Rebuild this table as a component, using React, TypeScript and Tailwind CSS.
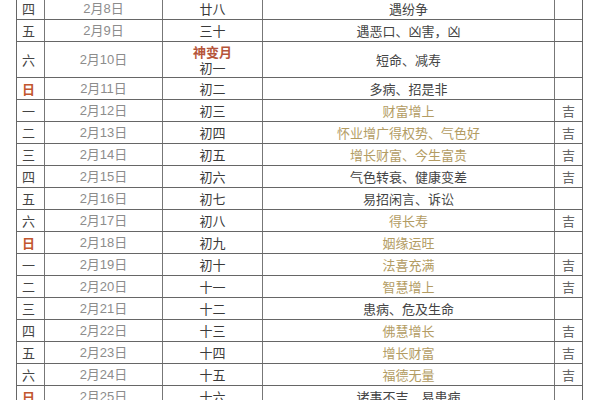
type Row = {
  wd: string;
  date: string;
  lunar: string;
  note?: string;
  text: string;
  gold?: boolean;
  ji?: boolean;
};

const rows: Row[] = [
  { wd: '四', date: '2月8日', lunar: '廿八', text: '遇纷争' },
  { wd: '五', date: '2月9日', lunar: '三十', text: '遇恶口、凶害，凶' },
  { wd: '六', date: '2月10日', lunar: '初一', note: '神变月', text: '短命、减寿' },
  { wd: '日', date: '2月11日', lunar: '初二', text: '多病、招是非' },
  { wd: '一', date: '2月12日', lunar: '初三', text: '财富增上', gold: true, ji: true },
  { wd: '二', date: '2月13日', lunar: '初四', text: '怀业增广得权势、气色好', gold: true, ji: true },
  { wd: '三', date: '2月14日', lunar: '初五', text: '增长财富、今生富贵', gold: true, ji: true },
  { wd: '四', date: '2月15日', lunar: '初六', text: '气色转衰、健康变差', ji: true },
  { wd: '五', date: '2月16日', lunar: '初七', text: '易招闲言、诉讼' },
  { wd: '六', date: '2月17日', lunar: '初八', text: '得长寿', gold: true, ji: true },
  { wd: '日', date: '2月18日', lunar: '初九', text: '姻缘运旺', gold: true },
  { wd: '一', date: '2月19日', lunar: '初十', text: '法喜充满', gold: true, ji: true },
  { wd: '二', date: '2月20日', lunar: '十一', text: '智慧增上', gold: true, ji: true },
  { wd: '三', date: '2月21日', lunar: '十二', text: '患病、危及生命' },
  { wd: '四', date: '2月22日', lunar: '十三', text: '佛慧增长', gold: true, ji: true },
  { wd: '五', date: '2月23日', lunar: '十四', text: '增长财富', gold: true, ji: true },
  { wd: '六', date: '2月24日', lunar: '十五', text: '福德无量', gold: true, ji: true },
  { wd: '日', date: '2月25日', lunar: '十六', text: '诸事不吉、易患病' },
];

export default function App() {
  return (
    <div
      className="w-[600px] h-[400px] overflow-hidden bg-white text-[13px] leading-none"
      style={{ fontFamily: '"Noto Sans CJK SC", "Noto Sans", sans-serif' }}
    >
      <div className="ml-[16px] -mt-[3px] w-[567px] border-l border-t border-[#666]">
        {rows.map((r, i) => (
          <div
            key={i}
            className={`flex border-b border-[#666] ${r.note ? 'h-[36px]' : 'h-[22px]'}`}
          >
            <div
              className={`w-[28px] shrink-0 border-r border-[#777] flex items-center pl-[5px] ${
                r.wd === '日' ? 'text-[#c2562e] font-bold' : 'text-[#444]'
              }`}
            >
              {r.wd}
            </div>
            <div
              className="w-[118px] shrink-0 border-r border-[#777] flex items-center justify-center text-[#8c8c8c]"
              style={{ fontFamily: '"Liberation Sans", "Noto Sans CJK SC", sans-serif' }}
            >
              {r.date}
            </div>
            <div className="w-[100px] shrink-0 border-r border-[#777] flex flex-col items-center justify-center text-[#3a3a3a]">
              {r.note && <span className="leading-[16px] text-[#b5553a] font-bold">{r.note}</span>}
              <span className={r.note ? 'leading-[16px]' : ''}>{r.lunar}</span>
            </div>
            <div
              className={`w-[292px] shrink-0 border-r border-[#777] flex items-center justify-center ${
                r.gold ? 'text-[#b39c63]' : 'text-[#444]'
              }`}
            >
              {r.text}
            </div>
            <div className="w-[28px] shrink-0 border-r border-[#666] flex items-center justify-center text-[#666]">
              {r.ji ? '吉' : ''}
            </div>
          </div>
        ))}
      </div>
    </div>
  );
}
